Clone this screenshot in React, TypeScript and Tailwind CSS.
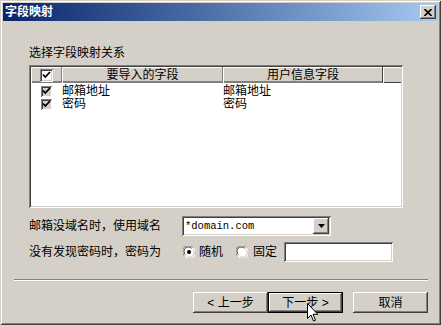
import React from 'react';

const FONT = "font-['Liberation_Sans','Noto_Sans_CJK_SC',sans-serif]";
const sunken =
  'shadow-[inset_1px_1px_0_#808080,inset_-1px_-1px_0_#ffffff,inset_2px_2px_0_#404040,inset_-2px_-2px_0_#d4d0c8]';
const raised =
  'shadow-[inset_-1px_-1px_0_#404040,inset_1px_1px_0_#ffffff,inset_-2px_-2px_0_#808080,inset_2px_2px_0_#d4d0c8]';

function Check({ size, box }: { size: number; box: string }) {
  return (
    <span
      className={`flex items-center justify-center ${box}`}
      style={{ width: size, height: size }}
    >
      <svg width="9" height="9" viewBox="0 0 9 9">
        <path d="M1 3.5 L3.3 6 L8 1" fill="none" stroke="#000" strokeWidth="1.8" />
      </svg>
    </span>
  );
}

function Radio({ checked }: { checked?: boolean }) {
  return (
    <svg width="12" height="12" viewBox="0 0 12 12" className="shrink-0">
      <circle cx="6" cy="6" r="5.5" fill="#fff" />
      <path d="M1.2 9.5 A5.5 5.5 0 0 1 9.5 1.2" fill="none" stroke="#808080" strokeWidth="1" />
      <path d="M2.3 8.6 A4.4 4.4 0 0 1 8.6 2.3" fill="none" stroke="#404040" strokeWidth="1" />
      <path d="M10.8 2.5 A5.5 5.5 0 0 1 2.5 10.8" fill="none" stroke="#ffffff" strokeWidth="1" />
      <path d="M9.7 3.4 A4.4 4.4 0 0 1 3.4 9.7" fill="none" stroke="#d4d0c8" strokeWidth="1" />
      {checked && <circle cx="6" cy="6" r="2" fill="#000" />}
    </svg>
  );
}

function Button({ label, focused }: { label: string; focused?: boolean }) {
  return (
    <div
      className={`flex h-[21px] w-[75px] items-center justify-center bg-[#d4d0c8] text-[12px] text-black ${
        focused
          ? 'shadow-[inset_0_0_0_1px_#000000,inset_-2px_-2px_0_#404040,inset_2px_2px_0_#ffffff,inset_-3px_-3px_0_#808080]'
          : raised
      }`}
    >
      {label}
    </div>
  );
}

export default function App() {
  return (
    <div
      className={`relative flex h-[325px] w-[441px] flex-col bg-[#d4d0c8] p-[3px] text-black ${FONT} shadow-[inset_1px_1px_0_#d4d0c8,inset_-1px_-1px_0_#404040,inset_2px_2px_0_#ffffff,inset_-2px_-2px_0_#808080]`}
    >
      {/* title bar */}
      <div className="flex h-[18px] items-center justify-between bg-gradient-to-r from-[#0a246a] to-[#a6caf0] pl-[2px] pr-[2px]">
        <span className="text-[12px] font-bold leading-[14px] text-white">字段映射</span>
        <div className={`flex h-[14px] w-[16px] items-center justify-center bg-[#d4d0c8] ${raised}`}>
          <svg width="8" height="7" viewBox="0 0 8 7">
            <path d="M0.5 0 L7.5 7 M7.5 0 L0.5 7" stroke="#000" strokeWidth="1.6" />
          </svg>
        </div>
      </div>

      <div className="flex flex-col pl-[26px] text-[12px] leading-[14px]">
        <div className="mt-[25px] h-[14px]">选择字段映射关系</div>

        {/* list */}
        <div className={`mt-[5px] h-[143px] w-[374px] bg-white p-[2px] ${sunken}`}>
          <div className="flex h-[16px] bg-[#d4d0c8] shadow-[inset_0_-1px_0_#404040]">
            <div className="flex w-[31px] items-center justify-center shadow-[inset_-1px_0_0_#808080,inset_1px_1px_0_#ffffff,inset_0_-2px_0_#808080]">
              <Check size={13} box={`bg-white ${sunken}`} />
            </div>
            <div className="flex w-[161px] items-center justify-center shadow-[inset_-1px_0_0_#808080,inset_1px_1px_0_#ffffff,inset_0_-2px_0_#808080]">
              要导入的字段
            </div>
            <div className="flex w-[160px] items-center justify-center shadow-[inset_-1px_0_0_#404040,inset_1px_1px_0_#ffffff,inset_0_-2px_0_#808080]">
              用户信息字段
            </div>
            <div className="flex-1 shadow-[inset_1px_1px_0_#ffffff]" />
          </div>
          <div className="mt-[2px] flex flex-col">
            {[
              ['邮箱地址', '邮箱地址'],
              ['密码', '密码'],
            ].map(([a, b]) => (
              <div key={a} className="flex h-[13px] items-center leading-[13px]">
                <div className="flex w-[31px] pl-[10px]">
                  <Check
                    size={11}
                    box="bg-[#d4d0c8] shadow-[inset_1px_1px_0_#808080,inset_-1px_-1px_0_#ffffff,inset_2px_2px_0_#404040]"
                  />
                </div>
                <div className="w-[161px]">{a}</div>
                <div className="w-[160px]">{b}</div>
              </div>
            ))}
          </div>
        </div>

        {/* domain row */}
        <div className="mt-[8px] flex h-[20px] items-center">
          <div className="w-[153px]">邮箱没域名时，使用域名</div>
          <div className={`flex h-[20px] w-[149px] items-center bg-white p-[2px] ${sunken}`}>
            <span className="flex-1 pl-[1px] font-['Liberation_Mono',monospace] text-[10.5px] leading-[14px]">
              *domain.com
            </span>
            <div className={`flex h-[16px] w-[16px] items-center justify-center bg-[#d4d0c8] ${raised}`}>
              <svg width="7" height="4" viewBox="0 0 7 4">
                <path d="M0 0 H7 L3.5 4 Z" fill="#000" />
              </svg>
            </div>
          </div>
        </div>

        {/* password row */}
        <div className="mt-[6px] flex h-[20px] items-center">
          <div className="w-[154px]">没有发现密码时，密码为</div>
          <Radio checked />
          <span className="ml-[4px] w-[37px]">随机</span>
          <Radio />
          <span className="ml-[5px] w-[31px]">固定</span>
          <div className={`h-[20px] w-[109px] bg-white ${sunken}`} />
        </div>
      </div>

      {/* separator */}
      <div className="ml-[11px] mr-[10px] mt-[17px] h-[2px] border-t border-b border-t-[#808080] border-b-white" />

      {/* buttons */}
      <div className="mt-[11px] flex pr-[10px] justify-end">
        <Button label="< 上一步" />
        <Button label="下一步 >" focused />
        <div className="w-[10px]" />
        <Button label="取消" />
      </div>

      {/* mouse cursor */}
      <svg
        width="12"
        height="19"
        viewBox="0 0 12 19"
        className="absolute left-[307px] top-[303px]"
      >
        <path
          d="M0.5 0.5 L0.5 15.5 L4 12 L6.5 18 L8.5 17.2 L6 11.3 L10.8 11.3 Z"
          fill="#fff"
          stroke="#000"
          strokeWidth="1"
        />
      </svg>
    </div>
  );
}
